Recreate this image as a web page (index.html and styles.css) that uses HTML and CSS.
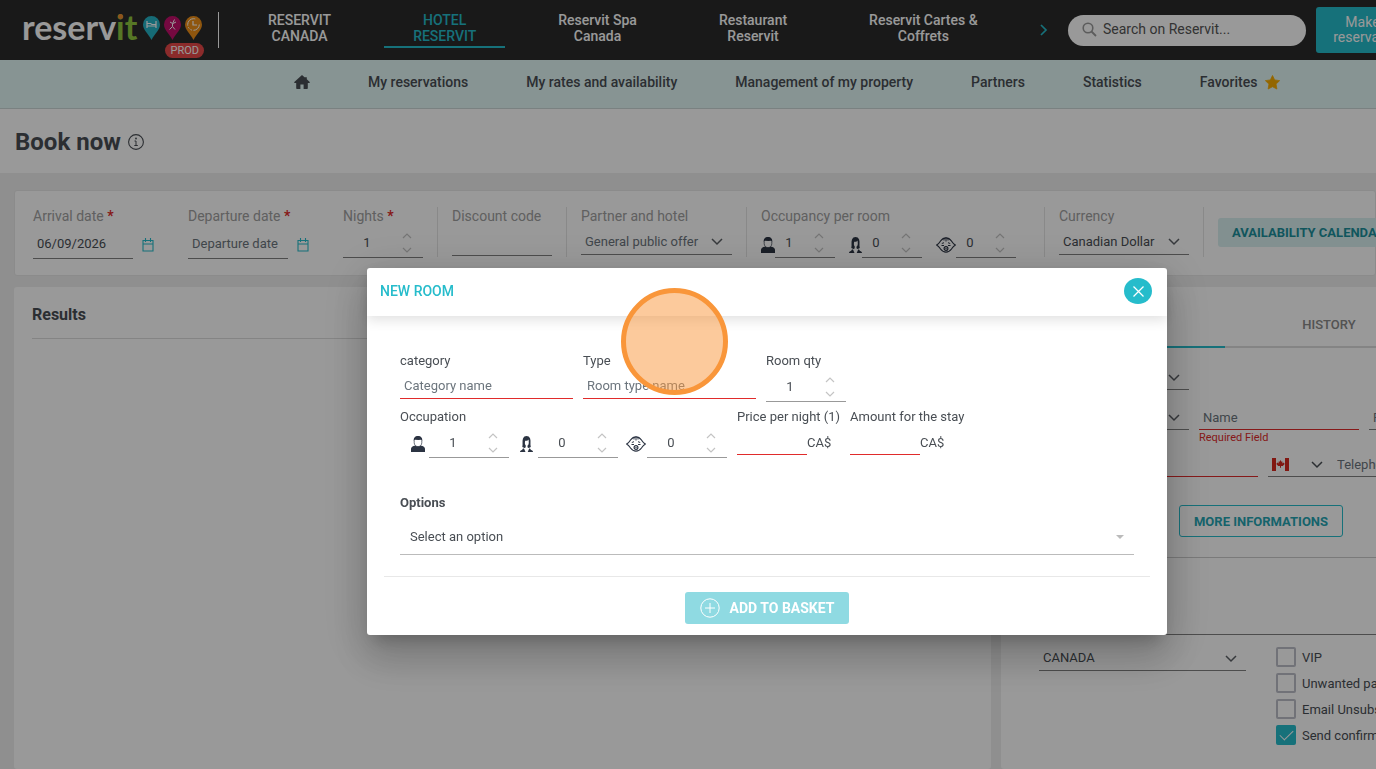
FILE: index.html
```html
<!DOCTYPE html>
<html lang="en">
<head>
    <meta charset="utf-8">
    <title>Book now - Reservit</title>
    <meta name="viewport" content="width=device-width, initial-scale=1.0">
    <link rel="stylesheet" href="styles.css">
</head>
<body>
    <svg class="sprite" aria-hidden="true">
        <symbol id="chevron" viewBox="0 0 12 8"><path d="M1 1l5 5 5-5" fill="none" stroke="currentColor" stroke-width="1.5"/></symbol>
        <symbol id="step-up" viewBox="0 0 10 6"><path d="M1 5l4-4 4 4" fill="none" stroke="currentColor" stroke-width="1.2"/></symbol>
        <symbol id="step-down" viewBox="0 0 10 6"><path d="M1 1l4 4 4-4" fill="none" stroke="currentColor" stroke-width="1.2"/></symbol>
        <symbol id="calendar" viewBox="0 0 12 14"><path d="M1 2.5h10v10.5H1zM1 6h10M3.5 0v4M8.5 0v4" fill="none" stroke="currentColor" stroke-width="1.1"/></symbol>
        <symbol id="adult" viewBox="0 0 14 16">
            <path d="M0 16v-3c0-1.5 1-2.5 2.5-3l2-.6h5l2 .6C13 10.5 14 11.5 14 13v3z" fill="currentColor"/>
            <path d="M3.2 4.5v2.200C3.200 9 5 10.600 7 10.600s3.800-1.600 3.800-3.900V4.500" fill="#fff" stroke="currentColor" stroke-width=".7"/>
            <path d="M2.800 5C2.300 2 4 0 7 0s4.700 2 4.200 5L10 3.800 7.500 4 4 3.800z" fill="currentColor"/>
        </symbol>
        <symbol id="woman" viewBox="0 0 13 16">
            <path d="M2.300 11C3 8 2 5 3 2.600 3.700.8 5 0 6.500 0s3 .8 3.600 2.600C11 5 10 8 10.800 11l-2 1H4.500z" fill="currentColor"/>
            <path d="M5.200 4.800c1.800.2 2.800-.3 3.400-1.200l.2 2.800c0 1.600-.5 2.600-1.300 3.100v1.700l1.800 1.300L6.600 16l-2.800-3.300 1.900-1.500V9.300C5.100 8.700 4.800 7.600 4.900 6.400z" fill="#fff"/>
            <path d="M0 16c0-1 .8-1.800 2-2l1-1.600h1L5.500 16zM7.700 16l1.500-3.600H10l1 1.600c1.200.2 2 1 2 2z" fill="currentColor"/>
        </symbol>
        <symbol id="baby" viewBox="0 0 20 16">
            <path d="M.7 8C3 6.500 3.500 5.500 4.500 4 6 2 8 .8 10 .8s4 1.200 5.500 3.200c1 1.500 1.500 2.500 3.800 4-2.300 1.500-2.800 2.500-3.800 4-1.500 2-3.500 3.200-5.500 3.200S6 14 4.500 12C3.500 10.500 3 9.500.7 8z" fill="none" stroke="currentColor" stroke-width="1.2"/>
            <path d="M8 1v2.500M10 .5v4M12 1v2.500M5.800 6.500l2.200-.8M14.200 6.500L12 5.700M5.500 8.500h2.500M12 8.500h2.500" fill="none" stroke="currentColor"/>
            <circle cx="10" cy="11.500" r="1.900" fill="#fff" stroke="currentColor" stroke-width="1.2"/><circle cx="10" cy="11.500" r=".7" fill="currentColor"/>
        </symbol>
    </svg>

    <header class="topbar">
        <a class="logo" href="#" aria-label="Reservit">
            <span class="logo-text">reserv<span class="logo-green"><span class="logo-i">i</span>t</span></span>
            <svg width="59" height="24" viewBox="0 0 59 24">
                <path d="M8.500 0a8.500 8.500 0 0 1 8.500 8.500C17 14 12 17 8.500 24 5 17 0 14 0 8.500A8.500 8.500 0 0 1 8.500 0z" fill="#26b2c5"/>
                <path d="M29.500 0a8.500 8.500 0 0 1 8.500 8.500C38 14 33 17 29.500 24 26 17 21 14 21 8.500A8.500 8.500 0 0 1 29.500 0z" fill="#c3106c"/>
                <path d="M50.500 0a8.500 8.500 0 0 1 8.500 8.500C59 14 54 17 50.500 24 47 17 42 14 42 8.500A8.500 8.500 0 0 1 50.500 0z" fill="#ee9018"/>
                <path d="M4 5v7M13 5v7M4 10h9M4.500 7.500h3l1.500 1h4" fill="none" stroke="#fff" stroke-width="1.2"/>
                <path d="M31.500 3.500l-2 4-2.500-1.500M29.500 7.500v3l2.500 3M29.500 10.500l-3 3M30 7.500l3-1.500" fill="none" stroke="#fff"/>
                <circle cx="50.500" cy="8.500" r="5.800" fill="none" stroke="#fff" stroke-dasharray="9 1.500 1.500 1.500 1.500 1.500 12"/>
                <path d="M50 5v4h4" fill="none" stroke="#fff" stroke-width="1.2"/>
            </svg>
            <span class="badge">PROD</span>
        </a>
        <nav class="hotels">
            <a href="#">RESERVIT<br>CANADA</a>
            <a href="#" class="active">HOTEL<br>RESERVIT</a>
            <a href="#">Reservit Spa<br>Canada</a>
            <a href="#">Restaurant<br>Reservit</a>
            <a href="#">Reservit Cartes &amp;<br>Coffrets</a>
        </nav>
        <button class="next" aria-label="Next hotels">
            <svg width="8" height="12" viewBox="0 0 8 12"><path d="M1 1l5 5-5 5" fill="none" stroke="currentColor" stroke-width="1.7"/></svg>
        </button>
        <label class="search">
            <svg width="15" height="15" viewBox="0 0 15 15"><circle cx="6" cy="6" r="4.800" fill="none" stroke="currentColor" stroke-width="1.6"/><path d="M9.500 9.500l4.500 4.500" stroke="currentColor" stroke-width="1.8"/></svg>
            <input type="text" placeholder="Search on Reservit..." aria-label="Search on Reservit">
        </label>
        <button class="make">Make a<br>reservation</button>
    </header>

    <nav class="menu">
        <a href="#" aria-label="Home"><svg width="16" height="14" viewBox="0 0 16 14"><path d="M8 0l2.500 2.300h2.300v2L16 7.200l-.7.900h-1.500V13c0 .6-.4 1-1 1H9.600V9.500H6.400V14H3.200c-.6 0-1-.4-1-1V8.100H.7L0 7.200z" fill="currentColor"/></svg></a>
        <a href="#">My reservations</a>
        <a href="#">My rates and availability</a>
        <a href="#">Management of my property</a>
        <a href="#">Partners</a>
        <a href="#">Statistics</a>
        <a href="#">Favorites <svg width="15" height="15" viewBox="0 0 16 15"><path d="M8 0l2.300 4.700 5.300.8-3.800 3.700.9 5.300L8 12l-4.700 2.500.9-5.300L.4 5.500l5.300-.8z" fill="#f5ab00" stroke="#f5ab00" stroke-linejoin="round" stroke-width=".8"/></svg></a>
    </nav>

    <div class="title">
        <h1>Book now</h1>
        <svg width="16" height="16" viewBox="0 0 16 16"><circle cx="8" cy="8" r="7.400" fill="none" stroke="currentColor" stroke-width="1.1"/><path d="M6.500 7H8v4.500M6.300 11.500h3.500" fill="none" stroke="currentColor"/><circle cx="8" cy="4.500" r=".9" fill="currentColor"/></svg>
    </div>

    <main>
        <form class="filters">
            <div class="field date">
                <label for="arrival">Arrival date <b>*</b></label>
                <div class="date-row">
                    <input type="text" id="arrival" value="06/09/2026">
                    <svg width="12" height="14"><use href="#calendar"/></svg>
                </div>
            </div>
            <div class="field date">
                <label for="departure">Departure date <b>*</b></label>
                <div class="date-row">
                    <input type="text" id="departure" placeholder="Departure date">
                    <svg width="12" height="14"><use href="#calendar"/></svg>
                </div>
            </div>
            <div class="field">
                <label for="nights">Nights <b>*</b></label>
                <div class="number">
                    <input type="number" id="nights" value="1">
                    <span class="steps"><svg><use href="#step-up"/></svg><svg><use href="#step-down"/></svg></span>
                </div>
            </div>
            <div class="line"></div>
            <div class="field discount">
                <label for="discount">Discount code</label>
                <input type="text" id="discount">
            </div>
            <div class="line"></div>
            <div class="field partner">
                <label for="partner">Partner and hotel</label>
                <div class="select muted">
                    <select id="partner"><option>General public offer</option></select>
                    <svg><use href="#chevron"/></svg>
                </div>
            </div>
            <div class="line"></div>
            <div class="field occupancy">
                <label for="adults">Occupancy per room</label>
                <div class="guests">
                    <svg width="14" height="16"><use href="#adult"/></svg>
                    <div class="number small">
                        <input type="number" id="adults" value="1">
                        <span class="steps"><svg><use href="#step-up"/></svg><svg><use href="#step-down"/></svg></span>
                    </div>
                    <svg width="13" height="16"><use href="#woman"/></svg>
                    <div class="number small">
                        <input type="number" aria-label="Teenagers" value="0">
                        <span class="steps"><svg><use href="#step-up"/></svg><svg><use href="#step-down"/></svg></span>
                    </div>
                    <svg width="20" height="16"><use href="#baby"/></svg>
                    <div class="number small">
                        <input type="number" aria-label="Babies" value="0">
                        <span class="steps"><svg><use href="#step-up"/></svg><svg><use href="#step-down"/></svg></span>
                    </div>
                </div>
            </div>
            <div class="line"></div>
            <div class="field currency">
                <label for="currency">Currency</label>
                <div class="select">
                    <select id="currency"><option>Canadian Dollar</option></select>
                    <svg><use href="#chevron"/></svg>
                </div>
            </div>
            <div class="line"></div>
            <button type="button" class="availability">AVAILABILITY CALENDAR</button>
        </form>

        <div class="workspace">
            <section class="results">
                <h2>Results</h2>
            </section>

            <section class="customer">
                <div class="tabs">
                    <button class="tab active" aria-label="Customer"></button>
                    <button class="tab">HISTORY</button>
                </div>
                <form class="customer-form">
                    <div class="select w150">
                        <select aria-label="Customer type"></select>
                        <svg><use href="#chevron"/></svg>
                    </div>
                    <div class="row names">
                        <div class="select w150">
                            <select aria-label="Civility"></select>
                            <svg><use href="#chevron"/></svg>
                        </div>
                        <div class="name">
                            <input type="text" class="invalid" placeholder="Name" aria-label="Name">
                            <p class="error">Required Field</p>
                        </div>
                        <input type="text" class="first-name" placeholder="First name" aria-label="First name">
                    </div>
                    <div class="row contact">
                        <input type="email" class="invalid email" aria-label="Email">
                        <div class="phone">
                            <button type="button" aria-label="Country code">
                                <svg width="17" height="13" viewBox="0 0 17 13"><path d="M0 0h4v13H0zM13 0h4v13h-4z" fill="#d8281e"/><path d="M8.500 2l1 1.800 1-.4-.2 2.200 1.400-1 1 1.500-1.900 2H9v1.700H8V8.100H6.200l-1.900-2 1-1.500 1.400 1-.2-2.200 1 .4z" fill="#d8281e"/></svg>
                                <svg class="arrow"><use href="#chevron"/></svg>
                            </button>
                            <input type="tel" placeholder="Telephone" aria-label="Telephone">
                        </div>
                    </div>
                    <button type="button" class="more">MORE INFORMATIONS</button>
                </form>
                <textarea class="comment" aria-label="Comment"></textarea>
                <div class="preferences">
                    <div class="select country">
                        <select aria-label="Country"><option>CANADA</option></select>
                        <svg><use href="#chevron"/></svg>
                    </div>
                    <div class="checks">
                        <label><input type="checkbox"> VIP</label>
                        <label><input type="checkbox"> Unwanted partner</label>
                        <label><input type="checkbox"> Email Unsubscribed</label>
                        <label><input type="checkbox" checked> Send confirmation</label>
                    </div>
                </div>
            </section>
        </div>
    </main>

    <div class="overlay">
        <div class="modal" role="dialog" aria-labelledby="modalTitle">
            <div class="modal-header">
                <h2 id="modalTitle">NEW ROOM</h2>
                <button class="close" aria-label="Close"><svg width="11" height="11" viewBox="0 0 11 11"><path d="M.5.5l10 10M10.500.5l-10 10" stroke="currentColor" stroke-width="1.3"/></svg></button>
            </div>
            <form class="modal-body">
                <div class="row">
                    <div class="field room-text">
                        <label for="category">category</label>
                        <input type="text" id="category" class="invalid" placeholder="Category name">
                    </div>
                    <div class="field room-text">
                        <label for="type">Type</label>
                        <input type="text" id="type" class="invalid" placeholder="Room type name">
                    </div>
                    <div class="field">
                        <label for="qty">Room qty</label>
                        <div class="number">
                            <input type="number" id="qty" value="1">
                            <span class="steps"><svg><use href="#step-up"/></svg><svg><use href="#step-down"/></svg></span>
                        </div>
                    </div>
                </div>
                <div class="row">
                    <div class="field">
                        <label for="roomAdults">Occupation</label>
                        <div class="occupants">
                            <span class="who"><svg width="14" height="16"><use href="#adult"/></svg></span>
                            <div class="number">
                                <input type="number" id="roomAdults" value="1">
                                <span class="steps"><svg><use href="#step-up"/></svg><svg><use href="#step-down"/></svg></span>
                            </div>
                            <span class="who"><svg width="13" height="16"><use href="#woman"/></svg></span>
                            <div class="number">
                                <input type="number" aria-label="Teenagers in room" value="0">
                                <span class="steps"><svg><use href="#step-up"/></svg><svg><use href="#step-down"/></svg></span>
                            </div>
                            <span class="who"><svg width="20" height="16"><use href="#baby"/></svg></span>
                            <div class="number">
                                <input type="number" aria-label="Babies in room" value="0">
                                <span class="steps"><svg><use href="#step-up"/></svg><svg><use href="#step-down"/></svg></span>
                            </div>
                        </div>
                    </div>
                    <div class="field">
                        <label for="price">Price per night (1)</label>
                        <div class="money"><input type="text" id="price" class="invalid"> CA$</div>
                    </div>
                    <div class="field">
                        <label for="amount">Amount for the stay</label>
                        <div class="money"><input type="text" id="amount" class="invalid"> CA$</div>
                    </div>
                </div>
                <label class="options-label" for="options">Options</label>
                <div class="select options">
                    <select id="options"><option>Select an option</option></select>
                    <svg viewBox="0 0 8 4"><path d="M0 0h8L4 4z" fill="currentColor"/></svg>
                </div>
            </form>
            <div class="modal-footer">
                <button class="add">
                    <svg width="20" height="20" viewBox="0 0 20 20"><circle cx="10" cy="10" r="9.200" fill="none" stroke="currentColor"/><path d="M10 5v10M5 10h10" stroke="currentColor"/></svg>
                    ADD TO BASKET
                </button>
            </div>
            <div class="click-marker"></div>
        </div>
    </div>
</body>
</html>
```

FILE: styles.css
```css
* {
    box-sizing: border-box;
}
body {
    margin: 0;
    height: 100vh;
    display: flex;
    flex-direction: column;
    overflow: hidden;
    background: #efefef;
    font-family: Roboto, sans-serif;
    font-size: 13px;
    color: #494e54;
}
h1, h2, p {
    margin: 0;
}
a {
    color: inherit;
    text-decoration: none;
}
button, input, select, textarea {
    font: inherit;
    color: inherit;
    margin: 0;
    padding: 0;
    border: 0;
    border-radius: 0;
    background: none;
    outline: none;
}
input::placeholder {
    color: #6c757d;
    opacity: 1;
}
svg {
    display: block;
    flex: none;
}
.sprite {
    position: absolute;
    width: 0;
    height: 0;
}

/* top bar */
.topbar {
    display: flex;
    align-items: center;
    flex: none;
    height: 60px;
    padding-left: 22px;
    background: #2b2b2b;
    color: #fff;
    white-space: nowrap;
}
.logo {
    position: relative;
    display: flex;
    align-items: flex-start;
    gap: 6px;
    height: 36px;
    padding-right: 16px;
    border-right: 1px solid #fff;
}
.logo svg {
    margin-top: 4px;
}
.logo-text {
    width: 115px;
    font-family: Lato, sans-serif;
    font-weight: bold;
    font-size: 34px;
    line-height: 30px;
}
.logo-green {
    color: #8fc63f;
}
.logo-i {
    position: relative;
}
.logo-i::after {
    content: "";
    position: absolute;
    left: 2px;
    top: 8px;
    width: 5px;
    height: 5px;
    border-radius: 50%;
    background: #ee8a30;
}
.badge {
    position: absolute;
    right: 14px;
    top: 31px;
    padding: 0 5px;
    border-radius: 8px;
    background: #e84848;
    font-size: 11px;
    line-height: 15px;
}
.hotels {
    display: flex;
    gap: 24px;
    padding-left: 20px;
    font-size: 14px;
    font-weight: 500;
    line-height: 16px;
    text-align: center;
}
.hotels a {
    padding: 0 29px 2px;
    border-bottom: 2px solid transparent;
}
.hotels .active {
    color: #26bccb;
    border-color: #26bccb;
}
.next {
    margin: 0 20px 0 auto;
    color: #26bccb;
}
.search {
    display: flex;
    align-items: center;
    gap: 2px;
    flex: none;
    width: 238px;
    height: 31px;
    padding: 0 14px 2px;
    border-radius: 16px;
    background: #fff;
    color: #999;
}
.search input {
    flex: 1;
    min-width: 0;
    font-size: 14px;
}
.search input::placeholder {
    color: #555;
}
.make {
    flex: none;
    width: 104px;
    height: 46px;
    margin: 0 -44px 0 10px;
    border-radius: 3px;
    background: #26bccb;
    color: #fff;
    font-size: 14px;
    line-height: 15px;
}

/* menu */
.menu {
    display: flex;
    align-items: center;
    flex: none;
    gap: 58px;
    height: 49px;
    padding: 0 0 4px 294px;
    border-bottom: 1px solid #ccd8d8;
    background: #e2f7f5;
    font-size: 14px;
    font-weight: 500;
    white-space: nowrap;
}
.menu a {
    display: flex;
    align-items: center;
    gap: 8px;
}

.title {
    display: flex;
    align-items: center;
    flex: none;
    gap: 7px;
    height: 64px;
    padding: 2px 0 0 15px;
    background: #fff;
}
.title h1 {
    font-size: 24px;
    line-height: 28px;
}

main {
    flex: 1;
    display: flex;
    flex-direction: column;
    gap: 11px;
    padding: 17px 0 0 14px;
}

/* form controls */
.field label {
    display: block;
    line-height: 18px;
    white-space: nowrap;
}
input[type="text"], input[type="email"], input[type="tel"] {
    padding: 0 4px;
}
input.invalid {
    border-bottom: 1px solid #e02b2b;
}
.number {
    display: flex;
    width: 80px;
    border-bottom: 1px solid #808080;
}
.number input {
    flex: 1;
    min-width: 0;
    text-align: center;
    appearance: textfield;
}
.number input::-webkit-inner-spin-button {
    appearance: none;
}
.number.small {
    width: 60px;
}
.steps {
    display: flex;
    flex-direction: column;
    align-items: center;
    justify-content: center;
    gap: 8px;
    width: 32px;
    color: #c4c4c4;
}
.steps svg {
    width: 10px;
    height: 6px;
}
.select {
    display: grid;
    align-items: center;
    height: 24px;
    border-bottom: 1px solid #808080;
}
.select select, .select svg {
    grid-area: 1 / 1;
}
.select select {
    appearance: none;
    width: 100%;
    padding: 0 4px;
}
.select svg {
    justify-self: end;
    width: 12px;
    height: 8px;
    margin-right: 9px;
    color: #5c6066;
    pointer-events: none;
}
.muted {
    color: #6c757d;
}

/* search filters */
.filters {
    display: flex;
    align-items: flex-start;
    flex: none;
    gap: 14px;
    height: 86px;
    padding: 16px 0 0 18px;
    border: 1px solid #e8e8e8;
    border-radius: 3px;
    background: #fff;
}
.filters .field {
    flex: none;
}
.filters label {
    margin-bottom: 6px;
    font-size: 14px;
    color: #a0a0a0;
}
.filters label b {
    color: #e02b2b;
}
.filters .date {
    width: 141px;
}
.date-row {
    display: flex;
    align-items: center;
    gap: 9px;
    color: #26bccb;
}
.date-row input {
    width: 100px;
    height: 28px;
    padding-bottom: 2px;
    border-bottom: 1px solid #808080;
    color: #494e54;
}
.filters .number {
    height: 27px;
    padding-bottom: 3px;
}
.filters .select {
    padding-bottom: 2px;
}
.line {
    flex: none;
    width: 1px;
    height: 50px;
    background: #e4e4e4;
}
.discount input {
    width: 100px;
    height: 25px;
    border-bottom: 1px solid #808080;
}
.filters .partner {
    width: 151px;
}
.filters .occupancy {
    width: 269px;
}
.filters .currency {
    width: 130px;
}
.guests {
    display: flex;
    align-items: center;
    color: #2b3342;
}
.guests .number {
    margin-right: 14px;
    color: #494e54;
}
.availability {
    flex: none;
    height: 29px;
    margin-top: 11px;
    padding: 0 14px;
    border-radius: 3px;
    background: #d9f0f1;
    color: #1b8f9b;
    font-weight: bold;
    white-space: nowrap;
}

/* results and customer */
.workspace {
    flex: 1;
    display: grid;
    grid-template-columns: minmax(977px, 1fr) 520px;
    gap: 10px;
}
.results, .customer {
    border-radius: 3px;
    background: #fff;
}
.results {
    padding: 17px 18px;
}
.results h2 {
    padding-bottom: 13px;
    border-bottom: 1px solid #ddd;
    font-size: 16px;
    line-height: 21px;
}
.tabs {
    display: flex;
    margin: 0 0 18px 18px;
}
.tab {
    width: 206px;
    height: 61px;
    padding: 16px 0 0 2px;
    border-bottom: 2px solid #ddd;
    color: #8a8a8a;
    font-weight: 500;
}
.tab.active {
    border-color: #26bccb;
}
.tabs::after {
    content: "";
    flex: 1;
    border-bottom: 2px solid #ddd;
}
.row {
    display: flex;
    align-items: flex-start;
    gap: 10px;
}
.customer-form {
    padding: 0 38px;
}
.customer-form input {
    height: 24px;
}
.w150 {
    width: 150px;
}
.names {
    height: 47px;
    margin-top: 16px;
}
.name input {
    width: 160px;
}
.error {
    color: #e02b2b;
    font-size: 11px;
    line-height: 16px;
}
.first-name {
    width: 112px;
    border-bottom: 1px solid #808080;
}
.email {
    flex: none;
    width: 219px;
}
.phone {
    display: flex;
    flex: 1;
    border-bottom: 1px solid #808080;
}
.phone button {
    display: flex;
    align-items: center;
    gap: 22px;
    padding: 0 10px 0 4px;
}
.phone .arrow {
    width: 12px;
    height: 8px;
}
.phone input {
    height: 23px;
    min-width: 0;
}
.more {
    display: block;
    height: 32px;
    margin: 28px auto 20px;
    padding: 0 14px;
    border: 1px solid #26bccb;
    border-radius: 3px;
    color: #26a5b3;
    font-weight: bold;
}
.comment {
    display: block;
    width: 100%;
    height: 78px;
    border-top: 1px solid #ccc;
    border-bottom: 1px solid #808080;
    resize: none;
}
.preferences {
    display: flex;
    gap: 30px;
    padding: 12px 38px;
}
.country {
    width: 207px;
}
.country select {
    padding-bottom: 2px;
}
.checks {
    display: flex;
    flex-direction: column;
    gap: 6px;
}
.checks label {
    display: flex;
    align-items: center;
    gap: 6px;
    height: 20px;
    white-space: nowrap;
}
.checks input {
    appearance: none;
    display: grid;
    place-items: center;
    width: 20px;
    height: 20px;
    border: 2px solid #bcbfc8;
    border-radius: 2px;
}
.checks input:checked {
    border-color: #26bccb;
    background: #26bccb;
}
.checks input:checked::before {
    content: "";
    width: 12px;
    height: 6px;
    margin-bottom: 3px;
    border-left: 1px solid #fff;
    border-bottom: 1px solid #fff;
    rotate: -45deg;
}

/* new room modal */
.overlay {
    position: fixed;
    inset: 0;
    display: flex;
    align-items: center;
    justify-content: center;
    padding: 134px 0 0 158px;
    background: rgba(0, 0, 0, 0.4);
}
.modal {
    position: relative;
    width: 800px;
    border-radius: 3px;
    background: #fff;
    box-shadow: 0 11px 15px -7px rgba(0, 0, 0, 0.2), 0 24px 38px 3px rgba(0, 0, 0, 0.14), 0 9px 46px 8px rgba(0, 0, 0, 0.12);
}
.modal-header {
    display: flex;
    align-items: center;
    justify-content: space-between;
    height: 48px;
    padding: 0 15px 2px 13px;
    box-shadow: 0 4px 12px rgba(0, 0, 0, 0.12);
}
.modal-header h2 {
    color: #26bccb;
    font-size: 14px;
    font-weight: 500;
}
.close {
    display: grid;
    place-items: center;
    width: 28px;
    height: 26px;
    border-radius: 50%;
    background: #26bccb;
    color: #fff;
}
.modal-body {
    padding: 36px 33px 21px;
}
.modal-body .row {
    margin-bottom: 6px;
}
.modal-body .field label {
    margin-bottom: 3px;
}
.modal-body .field input {
    height: 26px;
}
.room-text input {
    width: 173px;
}
.modal-body .number {
    height: 29px;
    border-color: #999;
}
.occupants {
    display: flex;
}
.who {
    display: grid;
    place-items: center;
    width: 29px;
    padding-left: 6px;
    color: #2b3342;
}
.money {
    display: flex;
    align-items: center;
}
.money input {
    width: 70px;
}
.options-label {
    display: block;
    margin: 36px 0 7px;
    font-weight: bold;
    line-height: 18px;
}
.options {
    height: 36px;
    border-color: #bbb;
}
.options select {
    padding: 0 10px;
}
.options svg {
    width: 8px;
    height: 4px;
    margin-right: 10px;
    color: #bbb;
}
.modal-footer {
    margin: 0 17px;
    padding: 15px 0 11px;
    border-top: 1px solid #e8e8e8;
}
.add {
    display: flex;
    align-items: center;
    gap: 10px;
    height: 32px;
    margin: 0 auto;
    padding: 0 15px;
    border-radius: 3px;
    background: #8fdae2;
    color: #fff;
    font-size: 14px;
    font-weight: bold;
}
.click-marker {
    position: absolute;
    left: 254px;
    top: 20px;
    width: 107px;
    height: 107px;
    border: 5px solid #f9963a;
    border-radius: 50%;
    background: rgba(249, 150, 58, 0.5);
    pointer-events: none;
}
```
